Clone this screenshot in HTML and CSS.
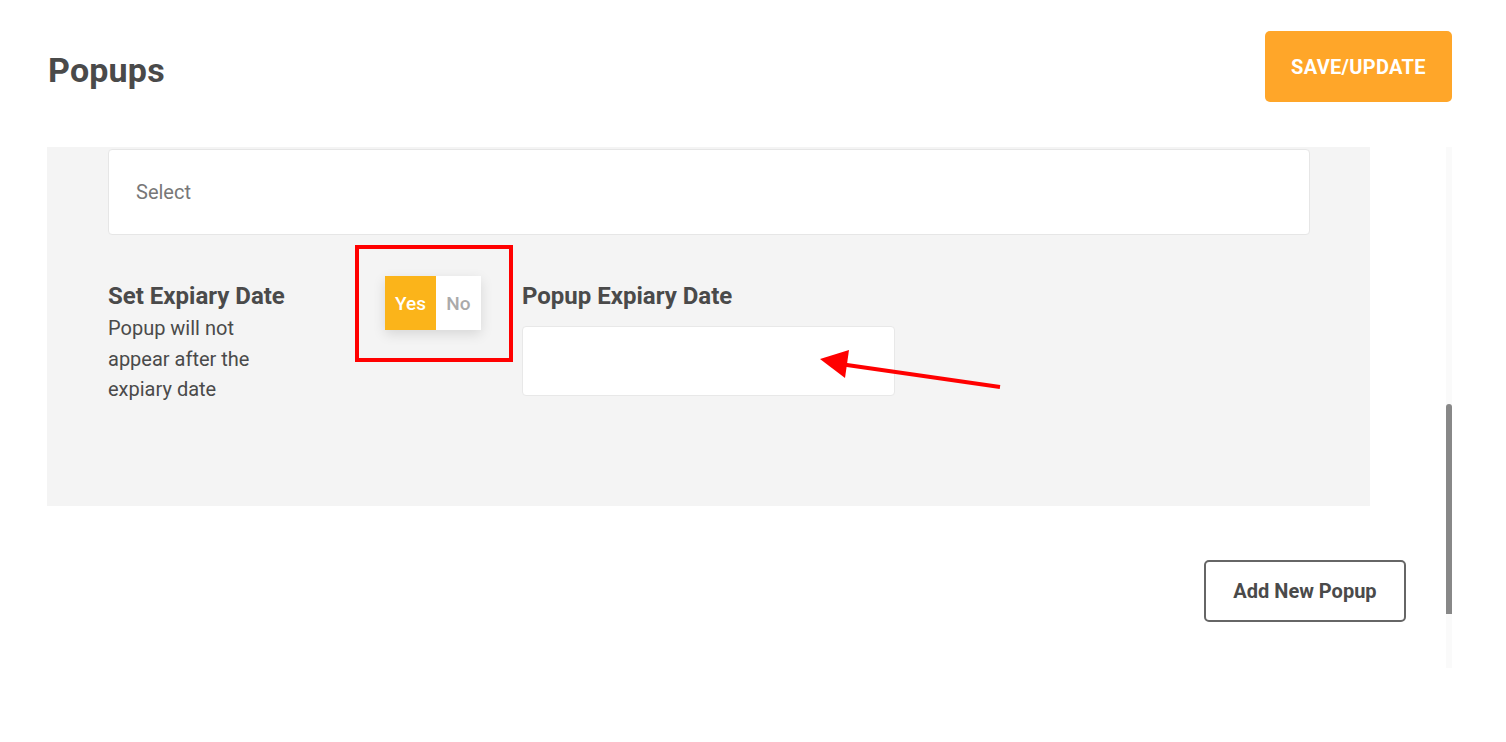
FILE: index.html
```html
<!DOCTYPE html>
<html>
<head>
<meta charset="utf-8">
<link rel="stylesheet" href="styles.css">
</head>
<body>
<header class="top">
  <h1 class="title">Popups</h1>
  <button class="save">SAVE/UPDATE</button>
</header>
<main class="main">
  <div class="col">
    <section class="panel">
      <div class="select">Select</div>
      <div class="row">
        <div class="desc">
          <div class="label">Set Expiary Date</div>
          <p class="help">Popup will not appear after the expiary date</p>
        </div>
        <div class="toggle-wrap">
          <div class="toggle">
            <span class="yes">Yes</span>
            <span class="no">No</span>
          </div>
        </div>
        <div class="field">
          <div class="label">Popup Expiary Date</div>
          <div class="input"></div>
        </div>
      </div>
    </section>
    <div class="actions">
      <button class="add">Add New Popup</button>
    </div>
  </div>
  <div class="track"><div class="thumb"></div></div>
</main>
<svg class="arrow" width="1506" height="742" viewBox="0 0 1506 742">
  <line x1="1000" y1="387" x2="840" y2="364" stroke="#ff0000" stroke-width="4"/>
  <polygon points="820,359 849,350 845,378" fill="#ff0000"/>
</svg>
</body>
</html>
```
FILE: styles.css
```css
* { box-sizing: border-box; }
html, body { margin: 0; padding: 0; background: #ffffff; }
body {
  font-family: Roboto, "Noto Sans", "Liberation Sans", sans-serif;
  color: #4a4a4a;
  width: 1506px;
  height: 742px;
  overflow: hidden;
  position: relative;
}
.top {
  display: flex;
  justify-content: space-between;
  align-items: flex-start;
  height: 147px;
  padding: 31px 54px 0 48px;
}
.title {
  margin: 17px 0 0 0;
  font-size: 34px;
  font-weight: 700;
  line-height: 44px;
  color: #4a4a4a;
  letter-spacing: 0.2px;
}
.save {
  width: 187px;
  height: 71px;
  border: none;
  border-radius: 5px;
  background: #ffa629;
  color: #ffffff;
  font-family: inherit;
  font-weight: 700;
  font-size: 20px;
  letter-spacing: 0.3px;
  padding: 0;
}
.main {
  display: flex;
  align-items: flex-start;
  padding-left: 47px;
}
.col {
  width: 1359px;
  display: flex;
  flex-direction: column;
}
.panel {
  width: 1323px;
  height: 359px;
  background: #f4f4f4;
  padding: 2px 60px 0 61px;
}
.select {
  height: 86px;
  background: #ffffff;
  border: 1px solid #e6e6e6;
  border-radius: 4px;
  padding-left: 27px;
  display: flex;
  align-items: center;
  font-size: 20px;
  color: #777777;
}
.row {
  display: flex;
  align-items: flex-start;
  margin-top: 10px;
}
.desc { width: 247px; padding-top: 36px; }
.label {
  font-size: 24px;
  font-weight: 700;
  line-height: 30px;
  color: #4a4a4a;
}
.help {
  margin: 2px 0 0 0;
  width: 170px;
  font-size: 20px;
  line-height: 30.5px;
  color: #4a4a4a;
}
.toggle-wrap {
  width: 158px;
  height: 117px;
  border: 4px solid #ff0000;
  padding: 27px 0 0 26px;
}
.toggle {
  display: flex;
  width: 96px;
  height: 54px;
  box-shadow: 0 4px 12px rgba(0,0,0,0.12);
}
.yes, .no {
  display: flex;
  align-items: center;
  justify-content: center;
  font-size: 19px;
  font-weight: 500;
}
.yes { width: 51px; background: #fbb41a; color: #ffffff; }
.no { width: 45px; background: #ffffff; color: #aaaaaa; }
.field { margin-left: 9px; padding-top: 36px; }
.input {
  margin-top: 15px;
  width: 373px;
  height: 70px;
  background: #ffffff;
  border: 1px solid #e8e8e8;
  border-radius: 4px;
}
.actions {
  display: flex;
  justify-content: flex-end;
  margin-top: 54px;
}
.add {
  width: 202px;
  height: 62px;
  background: #ffffff;
  border: 2px solid #666666;
  border-radius: 5px;
  font-family: inherit;
  font-size: 20px;
  font-weight: 700;
  color: #4a4a4a;
  padding: 0;
}
.track {
  margin-left: 40px;
  width: 6px;
  height: 521px;
  background: #fafafa;
  padding-top: 257px;
}
.thumb {
  width: 6px;
  height: 210px;
  background: #888888;
  border-radius: 3px 3px 0 0;
}
.arrow {
  position: absolute;
  left: 0;
  top: 0;
  pointer-events: none;
}
```
